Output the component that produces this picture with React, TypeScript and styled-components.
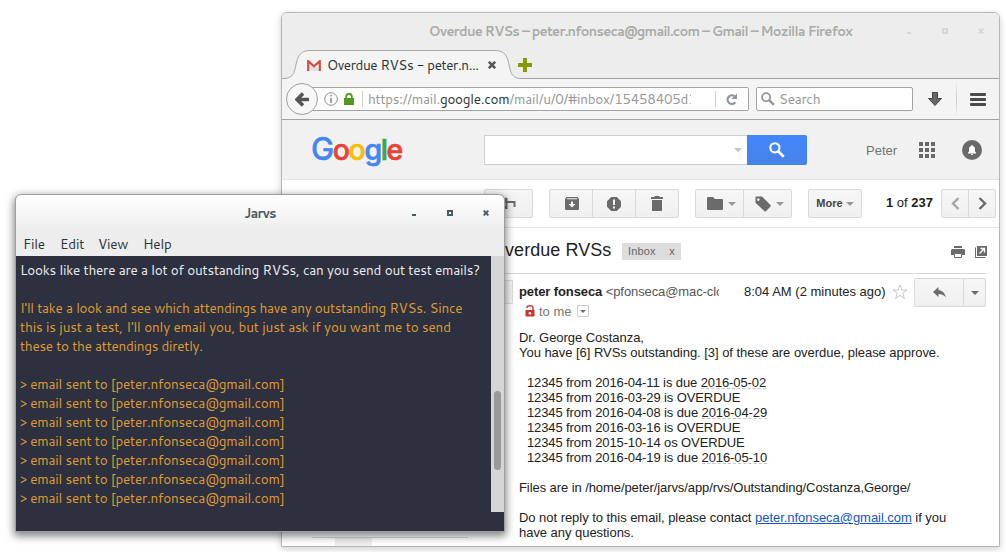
import React from 'react';
import styled, { createGlobalStyle, css } from 'styled-components';

const uiFont = `Cantarell, 'Noto Sans', 'Open Sans', sans-serif`;
const mailFont = `Arial, 'Liberation Sans', sans-serif`;

const GlobalStyle = createGlobalStyle`
  * { box-sizing: border-box; }
  html, body { margin: 0; padding: 0; background: #fff; }
  body { overflow: hidden; }
  svg { display: block; flex: none; }
`;

const Desktop = styled.div`
  position: relative;
  width: 1006px;
  height: 552px;
  overflow: hidden;
  background: #fff;
`;

/* ---------- browser window ---------- */

const BrowserWindow = styled.section`
  position: absolute;
  left: 281px;
  top: 12px;
  width: 719px;
  height: 535px;
  display: flex;
  flex-direction: column;
  border: 1px solid #b6b8b8;
  border-radius: 6px 6px 0 0;
  background: #fff;
  overflow: hidden;
`;

const BrowserShadow = styled.div`
  position: absolute;
  left: 281px;
  top: 12px;
  width: 719px;
  height: 535px;
  border-radius: 6px 6px 0 0;
  box-shadow: 0 2px 7px rgba(0, 0, 0, 0.2);
`;

const TitleBar = styled.header`
  position: relative;
  flex: none;
  height: 37px;
  display: flex;
  align-items: center;
  justify-content: center;
  padding-bottom: 2px;
  background: #ededed;
`;

const WindowTitle = styled.span<{ $color: string; $spacing: number }>`
  font: 700 13px/18px ${uiFont};
  color: ${(p) => p.$color};
  letter-spacing: ${(p) => p.$spacing}px;
  white-space: nowrap;
`;

const WindowControls = styled.div<{ $color: string }>`
  position: absolute;
  right: 15px;
  top: 15px;
  display: flex;
  gap: 29px;
  color: ${(p) => p.$color};
`;

const TabStrip = styled.div`
  position: relative;
  flex: none;
  height: 29px;
  display: flex;
  align-items: flex-start;
  background: #ededed;
  border-bottom: 1px solid #a0a4a6;
`;

const TabShape = styled.svg`
  position: absolute;
  left: 0;
  top: 0;
`;

const Tab = styled.div`
  position: relative;
  display: flex;
  align-items: center;
  width: 236px;
  height: 29px;
  padding: 1px 0 0 25px;
`;

const TabTitle = styled.span`
  width: 154px;
  margin: -1px 0 0 6px;
  font: 400 13.5px/18px ${uiFont};
  letter-spacing: -0.41px;
  color: #2e3436;
  white-space: nowrap;
`;

const TabClose = styled.span`
  margin-left: 7px;
  color: #52575a;
`;

const NewTab = styled.span`
  margin-top: 8px;
  color: #859900;
`;

const NavBar = styled.nav`
  flex: none;
  height: 41px;
  display: flex;
  align-items: center;
  background: #f4f4f4;
  border-bottom: 1px solid #a3a3a3;
`;

const BackButton = styled.span`
  position: relative;
  z-index: 1;
  flex: none;
  width: 32px;
  height: 32px;
  margin-left: 4px;
  display: flex;
  align-items: center;
  justify-content: center;
  border: 1px solid #a0a0a0;
  border-radius: 50%;
  background: #f7f7f7;
`;

const field = css`
  height: 24px;
  display: flex;
  align-items: center;
  border: 1px solid #a3a3a3;
  border-radius: 2px;
  background: #fff;
`;

const UrlField = styled.div`
  ${field}
  width: 439px;
  margin-left: -8px;
  padding-left: 13px;
`;

const LockSlot = styled.span`
  margin-left: 6px;
`;

const FieldRule = styled.span<{ $left: number; $right: number }>`
  width: 1px;
  height: 16px;
  margin: 0 ${(p) => p.$right}px 0 ${(p) => p.$left}px;
  background: #cfcfcf;
`;

const UrlText = styled.span`
  width: 323px;
  overflow: hidden;
  white-space: nowrap;
  font: 400 13.5px/18px ${uiFont};
  letter-spacing: -0.26px;
  color: #979797;
  b { font-weight: 400; color: #2e3436; }
`;

const SearchField = styled.div`
  ${field}
  width: 157px;
  margin-left: 7px;
  padding-left: 4px;
  gap: 4px;
  font: 400 13.5px/18px ${uiFont};
  letter-spacing: -0.3px;
  color: #979797;
`;

const NavIcon = styled.span<{ $left: number }>`
  margin-left: ${(p) => p.$left}px;
`;

const NavRule = styled.span`
  width: 1px;
  height: 34px;
  margin-left: 14px;
  background: linear-gradient(rgba(190, 190, 190, 0.1), #c9c9c9 50%, rgba(190, 190, 190, 0.1));
`;

/* ---------- mail page ---------- */

const MailHeader = styled.div`
  flex: none;
  height: 60px;
  display: flex;
  align-items: center;
  padding-left: 29px;
  background: #f1f1f1;
  border-bottom: 1px solid #e5e5e5;
`;

const Logo = styled.div`
  width: 173px;
  height: 38px;
  font: 500 28.5px/38px Inter, sans-serif;
  letter-spacing: -1.4px;
  white-space: nowrap;
`;

const LogoLetter = styled.span<{ $color: string }>`
  color: ${(p) => p.$color};
  -webkit-text-stroke: 0.7px ${(p) => p.$color};
  &:first-child {
    font-size: 31px;
    line-height: 1;
    -webkit-text-stroke-width: 0.4px;
  }
`;

const SearchBox = styled.div`
  width: 263px;
  height: 30px;
  display: flex;
  align-items: center;
  justify-content: flex-end;
  padding-right: 5px;
  border: 1px solid #cfcfcf;
  border-right: 0;
  background: #fff;
  color: #c4c4c4;
`;

const SearchButton = styled.span`
  width: 60px;
  height: 30px;
  display: flex;
  align-items: center;
  justify-content: center;
  border-radius: 0 2px 2px 0;
  background: linear-gradient(#4387fd, #4683ea);
`;

const Account = styled.div`
  display: flex;
  align-items: center;
  margin-left: 59px;
  font: 400 13px/15px ${mailFont};
  color: #737373;
`;

const AccountName = styled.span`
  padding-top: 2px;
`;

const AppsGrid = styled.span`
  display: grid;
  grid-template-columns: repeat(3, 4px);
  grid-auto-rows: 4px;
  gap: 2px;
  margin: 0 27px 0 22px;
  i { background: #6a6a6a; }
`;

const Toolbar = styled.div`
  flex: none;
  height: 48px;
  display: flex;
  align-items: flex-start;
  padding: 9px 0 0 202px;
  border-bottom: 1px solid #e5e5e5;
`;

const ButtonGroup = styled.div<{ $left?: number }>`
  display: flex;
  margin-left: ${(p) => p.$left ?? 0}px;
`;

const ToolButton = styled.span<{ $width: number; $gap?: number; $inset?: number }>`
  width: ${(p) => p.$width}px;
  height: 29px;
  display: flex;
  align-items: center;
  justify-content: center;
  gap: ${(p) => p.$gap ?? 0}px;
  padding-left: ${(p) => p.$inset ?? 0}px;
  border: 1px solid #d9d9d9;
  background: linear-gradient(#f6f6f6, #f0f0f0);
  color: #6b6b6b;
  font: 700 11px/13px ${mailFont};
  &:first-child { border-radius: 2px 0 0 2px; }
  &:last-child { border-radius: 0 2px 2px 0; }
  &:only-child { border-radius: 2px; }
  & + & { margin-left: -1px; }
`;

const MoreLabel = styled.span`
  color: #444;
`;

const PageCount = styled.span`
  width: 55px;
  margin: 6px 0 0 24px;
  font: 400 13px/15px ${mailFont};
  color: #222;
  white-space: nowrap;
`;

const SubjectRow = styled.div`
  flex: none;
  width: 674px;
  height: 46px;
  margin-left: 30px;
  padding-left: 179px;
  display: flex;
  align-items: center;
  border-bottom: 1px solid #d8d8d8;
`;

const Subject = styled.h1`
  margin: -1px 0 0;
  width: 131px;
  font: 400 18px/22px ${mailFont};
  letter-spacing: 0.05px;
  color: #222;
  white-space: nowrap;
`;

const LabelChip = styled.span`
  width: 59px;
  height: 17px;
  margin-top: 2px;
  padding: 0 6px;
  display: flex;
  justify-content: space-between;
  background: #ddd;
  font: 400 11px/16px ${mailFont};
  letter-spacing: 0.15px;
  color: #666;
`;

const SubjectActions = styled.span`
  display: flex;
  gap: 10px;
  margin: 3px -1px 0 auto;
  color: #6b6b6b;
`;

const Message = styled.article`
  display: flex;
  padding: 4px 0 0 206px;
  font: 400 13px/15px ${mailFont};
  color: #222;
`;

const Avatar = styled.span`
  flex: none;
  width: 25px;
  height: 24px;
  margin-top: 2px;
  border: 1px solid #dedede;
  background: #f5f5f5;
`;

const MessageMain = styled.div`
  width: 467px;
  margin-left: 6px;
`;

const SenderRow = styled.div`
  display: flex;
  height: 27px;
  align-items: flex-start;
  white-space: nowrap;
`;

const Sender = styled.span`
  width: 200px;
  margin-top: 6px;
  overflow: hidden;
  letter-spacing: -0.1px;
  color: #555;
  b { color: #222; }
`;

const MessageTime = styled.span`
  width: 148px;
  margin: 6px 0 0 25px;
`;

const StarSlot = styled.span`
  width: 22px;
  margin: 6px 0 0;
`;

const Recipient = styled.div`
  height: 12px;
  display: flex;
  align-items: center;
  padding-left: 6px;
  color: #777;
`;

const RecipientName = styled.span`
  width: 38px;
  margin-left: 4px;
`;

const DetailsToggle = styled.span`
  width: 12px;
  height: 12px;
  display: flex;
  align-items: center;
  justify-content: center;
  border: 1px solid #ccc;
  border-radius: 1px;
`;

const MessageBody = styled.div`
  margin-top: 13px;
  white-space: nowrap;
  a { color: #15c; text-decoration: underline; }
`;

const Paragraph = styled.p<{ $spacing: number }>`
  margin: 0 0 15px;
  letter-spacing: ${(p) => p.$spacing}px;
`;

const CaseLine = styled.div`
  height: 15px;
  padding-left: 8px;
  letter-spacing: -0.11px;
`;

const DueDate = styled.span`
  display: inline-block;
  height: 14px;
  vertical-align: top;
  border-bottom: 1px dashed #c4c4c4;
`;

const NextMessage = styled.div`
  position: absolute;
  left: 30px;
  bottom: 0;
  width: 156px;
  height: 9px;
  padding-left: 23px;
  border-top: 1px solid #d8d8d8;
  &::before {
    content: '';
    display: block;
    width: 37px;
    height: 8px;
    background: #efefef;
  }
`;

/* ---------- chat window ---------- */

const ChatWindow = styled.section`
  position: absolute;
  left: 15px;
  top: 194px;
  width: 490px;
  height: 338px;
  display: flex;
  flex-direction: column;
  border: 1px solid #9c9e9f;
  border-radius: 6px 6px 0 0;
  background: #2d303e;
  background-clip: padding-box;
  box-shadow: 0 3px 9px 1px rgba(0, 0, 0, 0.5);
  overflow: hidden;
`;

const ChatTitle = styled.header`
  position: relative;
  flex: none;
  height: 37px;
  display: flex;
  align-items: center;
  justify-content: center;
  padding-bottom: 2px;
  background: linear-gradient(#fff, #ededed);
`;

const MenuBar = styled.div`
  flex: none;
  height: 24px;
  display: flex;
  padding: 3px 0 0 7px;
  background: #ededed;
`;

const MenuItem = styled.span<{ $width: number }>`
  width: ${(p) => p.$width}px;
  font: 400 13.5px/18px ${uiFont};
  letter-spacing: -0.2px;
  color: #2e3436;
`;

const ChatBody = styled.div`
  display: flex;
  justify-content: space-between;
  height: 256px;
`;

const ChatLog = styled.div`
  padding: 4px 0 0 4px;
`;

const ChatLine = styled.div<{ $color?: string; $spacing?: number }>`
  height: 19px;
  font: 400 13.5px/19px ${uiFont};
  letter-spacing: ${(p) => p.$spacing ?? -0.24}px;
  color: ${(p) => p.$color ?? '#dd9a35'};
  white-space: pre;
`;

const Scrollbar = styled.div`
  width: 13px;
  height: 256px;
  padding: 135px 3px 0;
  background: #d5d5d5;
`;

const ScrollThumb = styled.div`
  height: 79px;
  border-radius: 4px;
  background: #999a9b;
`;

/* ---------- drawings ---------- */

const MinimizeIcon = () => (
  <svg width="7" height="7"><path d="M1 4h4v2H1z" fill="currentColor" /></svg>
);
const MaximizeIcon = () => (
  <svg width="7" height="7"><path d="M1 1h4v4H1z" fill="none" stroke="currentColor" strokeWidth="2" /></svg>
);
const CloseIcon = ({ size = 6 }: { size?: number }) => (
  <svg width={size} height={size} viewBox="0 0 6 6">
    <path d="M.6 .6l4.800 4.800M5.400 .6L.6 5.400" stroke="currentColor" strokeWidth="1.900" />
  </svg>
);
const Caret = ({ color = '#999' }: { color?: string }) => (
  <svg width="8" height="4"><path d="M0 0h8L4 4z" fill={color} /></svg>
);
const Magnifier = ({ size, color, stroke }: { size: number; color: string; stroke: number }) => (
  <svg width={size} height={size} viewBox="0 0 15 15" fill="none" stroke={color}>
    <circle cx="5.5" cy="5.5" r="4.3" strokeWidth={stroke} />
    <path d="M8.8 8.8l5 5" strokeWidth={stroke + 0.6} />
  </svg>
);

const Controls = ({ color }: { color: string }) => (
  <WindowControls $color={color}>
    <MinimizeIcon />
    <MaximizeIcon />
    <CloseIcon />
  </WindowControls>
);

const logo: [string, string][] = [
  ['G', '#4285f4'], ['o', '#ea4335'], ['o', '#fbbc05'],
  ['g', '#4285f4'], ['l', '#34a853'], ['e', '#ea4335'],
];

const cases: { text: string; due?: string }[] = [
  { text: '12345 from 2016-04-11 is due ', due: '2016-05-02' },
  { text: '12345 from 2016-03-29 is OVERDUE' },
  { text: '12345 from 2016-04-08 is due ', due: '2016-04-29' },
  { text: '12345 from 2016-03-16 is OVERDUE' },
  { text: '12345 from 2015-10-14 os OVERDUE' },
  { text: '12345 from 2016-04-19 is due ', due: '2016-05-10' },
];

const Browser = () => (
  <BrowserWindow>
    <TitleBar>
      <WindowTitle $color="#a9aca8" $spacing={-0.74}>
        Overdue RVSs – peter.nfonseca@gmail.com – Gmail – Mozilla Firefox
      </WindowTitle>
      <Controls color="#d6d8d8" />
    </TitleBar>

    <TabStrip>
      <TabShape width="244" height="29">
        <path
          d="M0 28.500C9 28.500 11.500 26 13.500 17C15.500 6 18 0.500 28 0.500H213C223 0.500 225.500 6 227.500 17C229.500 26 232 28.500 240 28.500V30H0Z"
          fill="#f4f4f4"
        />
        <path
          d="M0 28.500C9 28.500 11.500 26 13.500 17C15.500 6 18 0.500 28 0.500H213C223 0.500 225.500 6 227.500 17C229.500 26 232 28.500 240 28.500"
          fill="none"
          stroke="#a3a9ae"
        />
      </TabShape>
      <Tab>
        <svg width="14" height="11" viewBox="0 0 14 11">
          <path d="M1 0h12v11H1z" fill="#eee" />
          <path d="M2 10.500L7 5.500l5 5z" fill="#ddd" />
          <path d="M1.200 11V1.200L7 6.300l5.800-5.100V11" fill="none" stroke="#d54b3d" strokeWidth="2.200" />
        </svg>
        <TabTitle>Overdue RVSs - peter.n...</TabTitle>
        <TabClose><CloseIcon size={8} /></TabClose>
      </Tab>
      <NewTab>
        <svg width="14" height="14"><path d="M5 0h4v5h5v4H9v5H5V9H0V5h5z" fill="currentColor" /></svg>
      </NewTab>
    </TabStrip>

    <NavBar>
      <BackButton>
        <svg width="14" height="15" viewBox="0 0 14 15">
          <path d="M8 1.500L2 7.500l6 6M2.500 7.500H14" fill="none" stroke="#555" strokeWidth="3.600" />
        </svg>
      </BackButton>
      <UrlField>
        <svg width="14" height="14" viewBox="0 0 14 14">
          <circle cx="7" cy="7" r="6.300" fill="none" stroke="#8c8c8c" />
          <path d="M6.200 3h1.600v1.600H6.200zM6.200 6h1.600v5H6.200z" fill="#8c8c8c" />
        </svg>
        <LockSlot>
          <svg width="10" height="12" viewBox="0 0 10 12">
            <path d="M2.200 6V3.600a2.800 2.800 0 0 1 5.600 0V6" fill="none" stroke="#4e9a1f" strokeWidth="1.800" />
            <path d="M0 5h10v7H0z" fill="#4e9a1f" />
          </svg>
        </LockSlot>
        <FieldRule $left={8} $right={5} />
        <UrlText>https://mail.<b>google.com</b>/mail/u/0/#inbox/15458405d1</UrlText>
        <FieldRule $left={24} $right={10} />
        <svg width="12" height="13" viewBox="0 0 12 13">
          <path d="M9.300 9.300A4.300 4.300 0 1 1 8.500 3.200" fill="none" stroke="#8a97a3" strokeWidth="2.200" />
          <path d="M11 0.500V6H5.500z" fill="#8a97a3" />
        </svg>
      </UrlField>
      <SearchField>
        <Magnifier size={14} color="#979797" stroke={2} />
        Search
      </SearchField>
      <NavIcon $left={15}>
        <svg width="14" height="14" viewBox="0 0 14 14">
          <path d="M4.500 0.500h5v6h4L7 13.500 0.500 6.500h4z" fill="#666" stroke="#444" />
        </svg>
      </NavIcon>
      <NavRule />
      <NavIcon $left={13}>
        <svg width="16" height="13" viewBox="0 0 16 13" fill="#4a4a4a">
          <rect width="16" height="3" rx="1" />
          <rect y="5" width="16" height="3" rx="1" />
          <rect y="10" width="16" height="3" rx="1" />
        </svg>
      </NavIcon>
    </NavBar>

    <MailHeader>
      <Logo>
        {logo.map(([letter, color], i) => (
          <LogoLetter key={i} $color={color}>{letter}</LogoLetter>
        ))}
      </Logo>
      <SearchBox><Caret color="#c4c4c4" /></SearchBox>
      <SearchButton><Magnifier size={16} color="#fff" stroke={2} /></SearchButton>
      <Account>
        <AccountName>Peter</AccountName>
        <AppsGrid>{Array.from({ length: 9 }, (_, i) => <i key={i} />)}</AppsGrid>
        <svg width="20" height="20" viewBox="0 0 20 20">
          <circle cx="10" cy="10" r="10" fill="#6a6a6a" />
          <path d="M6 13.500v-1l1-1V9a3 3 0 0 1 2.200-3V5.200h1.600V6A3 3 0 0 1 13 9v2.500l1 1v1zM8.800 14h2.400a1.200 1 0 0 1-2.400 0z" fill="#fff" />
        </svg>
      </Account>
    </MailHeader>

    <Toolbar>
      <ButtonGroup>
        <ToolButton $width={49}>
          <svg width="16" height="13" viewBox="0 0 16 13">
            <path d="M6 1L1 6.500l5 5M6 1v11M2 5h12v5" fill="none" stroke="#6b6b6b" strokeWidth="2" transform="translate(-.5 0)" />
          </svg>
        </ToolButton>
      </ButtonGroup>
      <ButtonGroup $left={16}>
        <ToolButton $width={44}>
          <svg width="14" height="13" viewBox="0 0 14 13" transform="translate(1 0)">
            <path d="M1.500 0h11L14 2v9.500q0 1.500-1.500 1.500h-11Q0 13 0 11.500V2z" fill="#6b6b6b" />
            <path d="M1.700 2.200l.6-.9h9.400l.6.900zM6 4.500h2V7h2.500L7 10.500 3.500 7H6z" fill="#f3f3f3" />
          </svg>
        </ToolButton>
        <ToolButton $width={44}>
          <svg width="14" height="14" viewBox="0 0 14 14">
            <path d="M4.200 0h5.600L14 4.200v5.600L9.800 14H4.200L0 9.800V4.200z" fill="#6b6b6b" />
            <path d="M6 2.500h2V8H6zM6 9.500h2v2H6z" fill="#f3f3f3" />
          </svg>
        </ToolButton>
        <ToolButton $width={44}>
          <svg width="12" height="15" viewBox="0 0 12 15" fill="#6b6b6b">
            <path d="M0 1h3.500V0h5v1H12v2H0zM1 4h10v11H1z" />
          </svg>
        </ToolButton>
      </ButtonGroup>
      <ButtonGroup $left={16}>
        <ToolButton $width={49} $gap={5} $inset={3}>
          <svg width="16" height="13" viewBox="0 0 16 13">
            <path d="M1 0h5l2 2h7q1 0 1 1v9q0 1-1 1H1q-1 0-1-1V1q0-1 1-1z" fill="#6b6b6b" />
          </svg>
          <Caret />
        </ToolButton>
        <ToolButton $width={49} $gap={5} $inset={3}>
          <svg width="16" height="16" viewBox="0 0 16 16">
            <path fillRule="evenodd" d="M1.500 0.500H7l8.500 8.500q.6.700 0 1.400l-4.600 4.800q-.7.600-1.400 0L.5 6.800V1.500q0-1 1-1zM3.300 2.300a1.300 1.300 0 1 0 .01 0z" fill="#6b6b6b" />
          </svg>
          <Caret />
        </ToolButton>
      </ButtonGroup>
      <ButtonGroup $left={16}>
        <ToolButton $width={54} $gap={3}>
          <MoreLabel>More</MoreLabel>
          <Caret />
        </ToolButton>
      </ButtonGroup>
      <PageCount><b>1</b> of <b>237</b></PageCount>
      <ButtonGroup>
        <ToolButton $width={28}>
          <svg width="9" height="13" viewBox="0 0 9 13"><path d="M7.500 1L2 6.500 7.500 12" fill="none" stroke="#a5a5a5" strokeWidth="2.400" /></svg>
        </ToolButton>
        <ToolButton $width={28}>
          <svg width="9" height="13" viewBox="0 0 9 13"><path d="M1.500 1L7 6.500 1.500 12" fill="none" stroke="#6b6b6b" strokeWidth="2.400" /></svg>
        </ToolButton>
      </ButtonGroup>
    </Toolbar>

    <SubjectRow>
      <Subject>Overdue RVSs</Subject>
      <LabelChip><span>Inbox</span><span>x</span></LabelChip>
      <SubjectActions>
        <svg width="14" height="12" viewBox="0 0 14 12">
          <path d="M3 0h8v2H3zM1.500 3h11Q14 3 14 4.500V9h-3V7H3v2H0V4.500Q0 3 1.500 3z" fill="currentColor" />
          <path d="M3.500 7.500h7v4h-7z" fill="#fff" stroke="currentColor" />
        </svg>
        <svg width="12" height="12" viewBox="0 0 12 12">
          <path d="M0 1.500h1V11h9.500v1H0zM2 0h10v10H2z" fill="currentColor" />
          <path d="M4.500 7.500L9 3M5.500 2.500h4v4" fill="none" stroke="#fff" strokeWidth="1.300" />
        </svg>
      </SubjectActions>
    </SubjectRow>

    <Message>
      <Avatar />
      <MessageMain>
        <SenderRow>
          <Sender><b>peter fonseca</b> &lt;pfonseca@mac-clo</Sender>
          <MessageTime>8:04 AM (2 minutes ago)</MessageTime>
          <StarSlot>
            <svg width="16" height="16" viewBox="0 0 16 16">
              <path d="M8 1l1.800 5h5.200l-4.200 3.200L12.400 14.500 8 11.300 3.600 14.500l1.600-5.300L1 6h5.200z" fill="#fff" stroke="#c8c8c8" />
            </svg>
          </StarSlot>
          <ButtonGroup>
            <ToolButton $width={50}>
              <svg width="13" height="11" viewBox="0 0 13 11">
                <path d="M5.500 0v3Q11.500 3.500 13 10.500 10.500 7 5.500 7v3L0 5z" fill="#6b6b6b" />
              </svg>
            </ToolButton>
            <ToolButton $width={23}><Caret color="#6b6b6b" /></ToolButton>
          </ButtonGroup>
        </SenderRow>
        <Recipient>
          <svg width="10" height="12" viewBox="0 0 10 12">
            <path d="M2 3V2.500q0-1.800 3-1.800t3 2V6" fill="none" stroke="#c5372c" strokeWidth="1.400" />
            <path d="M0.500 5h9v6.500h-9z" fill="#c5372c" />
            <circle cx="5" cy="8.200" r="1.300" fill="#fff" />
          </svg>
          <RecipientName>to me</RecipientName>
          <DetailsToggle><svg width="6" height="3"><path d="M0 0h6L3 3z" fill="#6b6b6b" /></svg></DetailsToggle>
        </Recipient>
        <MessageBody>
          <Paragraph $spacing={-0.04}>
            Dr. George Costanza,<br />You have [6] RVSs outstanding. [3] of these are overdue, please approve.
          </Paragraph>
          {cases.map((c, i) => (
            <CaseLine key={i}>{c.text}{c.due && <DueDate>{c.due}</DueDate>}</CaseLine>
          ))}
          <br />
          <Paragraph $spacing={-0.08}>Files are in /home/peter/jarvs/app/rvs/Outstanding/Costanza,George/</Paragraph>
          <Paragraph $spacing={-0.04}>
            Do not reply to this email, please contact <a>peter.nfonseca@gmail.com</a> if you<br />have any questions.
          </Paragraph>
        </MessageBody>
      </MessageMain>
    </Message>
    <NextMessage />
  </BrowserWindow>
);

const Chat = () => (
  <ChatWindow>
    <ChatTitle>
      <WindowTitle $color="#4b5a61" $spacing={-0.9}>Jarvs</WindowTitle>
      <Controls color="#475a62" />
    </ChatTitle>
    <MenuBar>
      <MenuItem $width={37}>File</MenuItem>
      <MenuItem $width={38}>Edit</MenuItem>
      <MenuItem $width={45}>View</MenuItem>
      <MenuItem $width={40}>Help</MenuItem>
    </MenuBar>
    <ChatBody>
      <ChatLog>
        <ChatLine $color="#e9eaec" $spacing={-0.23}>Looks like there are a lot of outstanding RVSs, can you send out test emails?</ChatLine>
        <ChatLine> </ChatLine>
        <ChatLine $spacing={-0.28}>I'll take a look and see which attendings have any outstanding RVSs. Since</ChatLine>
        <ChatLine $spacing={-0.16}>this is just a test, I'll only email you, but just ask if you want me to send</ChatLine>
        <ChatLine $spacing={-0.27}>these to the attendings diretly.</ChatLine>
        <ChatLine> </ChatLine>
        {Array.from({ length: 7 }, (_, i) => (
          <ChatLine key={i}>&gt; email sent to [peter.nfonseca@gmail.com]</ChatLine>
        ))}
      </ChatLog>
      <Scrollbar><ScrollThumb /></Scrollbar>
    </ChatBody>
  </ChatWindow>
);

export default function App() {
  return (
    <>
      <GlobalStyle />
      <Desktop>
        <BrowserShadow />
        <Browser />
        <Chat />
      </Desktop>
    </>
  );
}
